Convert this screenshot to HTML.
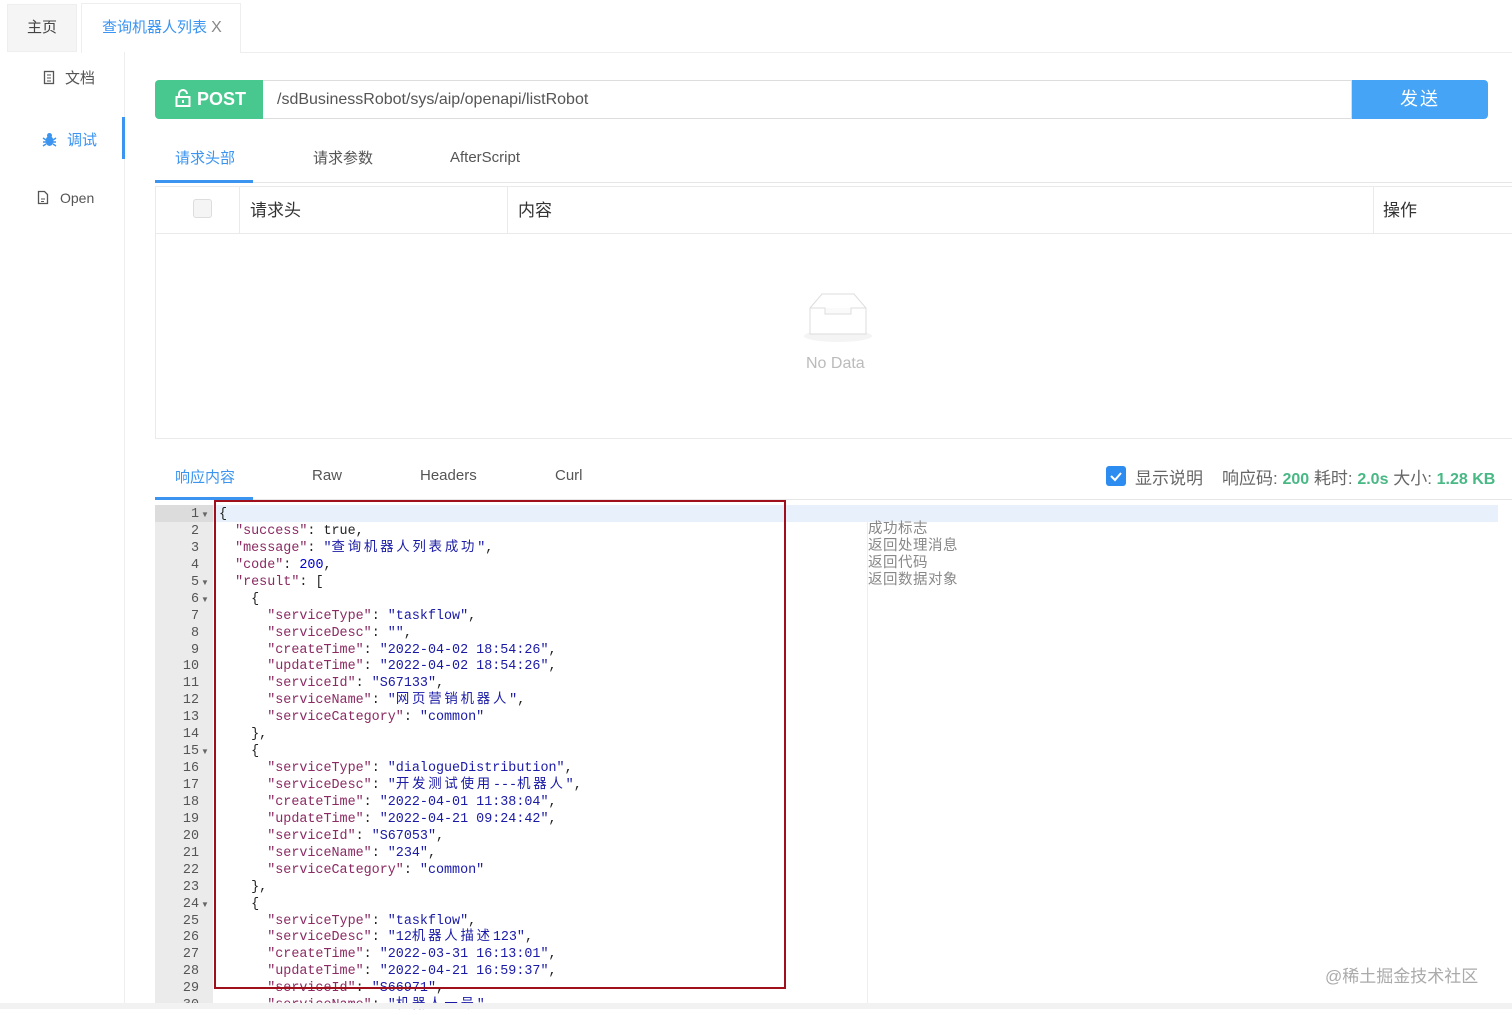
<!DOCTYPE html>
<html><head><meta charset="utf-8"><style>
*{margin:0;padding:0;box-sizing:border-box}
body{width:1512px;height:1009px;overflow:hidden;background:#fff;font-family:"Liberation Sans","Noto Sans CJK SC",sans-serif;position:relative;color:#333}
.abs{position:absolute}
.tab0{left:7px;top:4px;width:70px;height:48px;background:#f5f5f5;border:1px solid #eee;font-size:15px;color:#444;text-align:center;line-height:46px}
.tab1{left:81px;top:3px;width:160px;height:50px;background:#fff;border:1px solid #eee;border-bottom:none;font-size:15px;color:#3a94f0;line-height:48px;padding-left:20px}
.side{left:0;top:52px;width:125px;height:957px;border-right:1px solid #eee}
.sitem{font-size:15px;color:#555}
.code{font-family:"Liberation Mono","Noto Sans CJK SC",monospace;font-size:13.4px;line-height:16.93px;white-space:pre;color:#222}
.k{color:#8b2a63}.s{color:#1a1aa6}.n{color:#0000cd}
.c{letter-spacing:2.8px}
.ln{font-family:"Liberation Mono",monospace;font-size:13.4px;line-height:16.93px;color:#555;text-align:right;white-space:pre}
</style></head><body>
<div class="abs tab0">主页</div>
<div class="abs tab1">查询机器人列表 <span style="color:#888;font-size:16px">X</span></div>
<div class="abs" style="left:241px;top:52px;width:1271px;height:1px;background:#eee"></div>
<div class="abs side"></div>
<div class="abs sitem" style="left:43px;top:67px"><svg width="12" height="15" style="vertical-align:-2px;margin-right:10px"><rect x="1.5" y="1.5" width="9" height="12" fill="none" stroke="#555" stroke-width="1.3"/><path d="M4 5h4M4 8h4M4 11h4" stroke="#555"/></svg>文档</div>
<div class="abs sitem" style="left:42px;top:129px;color:#3a94f0"><svg width="15" height="15" style="vertical-align:-2px;margin-right:10px"><ellipse cx="7.5" cy="9" rx="4" ry="5" fill="#3a94f0"/><circle cx="7.5" cy="3.5" r="2.5" fill="#3a94f0"/><path d="M1 6l3 2M14 6l-3 2M1 10h3M14 10h-3M1 14l3-2M14 14l-3-2" stroke="#3a94f0" stroke-width="1.5"/></svg>调试</div>
<div class="abs" style="left:122px;top:117px;width:3px;height:42px;background:#3a94f0"></div>
<div class="abs sitem" style="left:37px;top:190px;font-size:14px"><svg width="12" height="15" style="vertical-align:-2px;margin-right:11px"><path d="M1.5 1.5h6l3 3v9h-9z" fill="none" stroke="#555" stroke-width="1.3"/><path d="M4 9h4M4 11.5h3" stroke="#555"/></svg>Open</div>

<div class="abs" style="left:155px;top:80px;width:108px;height:39px;background:#48c78e;border-radius:4px 0 0 4px;color:#fff;font-weight:bold;font-size:18px;line-height:39px;padding-left:20px"><svg width="16" height="18" style="vertical-align:-2px;margin-right:6px"><rect x="1.5" y="8" width="13" height="9" fill="none" stroke="#fff" stroke-width="2"/><path d="M4 8V5a4 4 0 0 1 8 0" fill="none" stroke="#fff" stroke-width="2"/><path d="M8 11v3" stroke="#fff" stroke-width="2"/></svg>POST</div>
<div class="abs" style="left:263px;top:80px;width:1089px;height:39px;border:1px solid #ddd;border-left:none;font-size:16px;color:#555;line-height:37px;padding-left:14px">/sdBusinessRobot/sys/aip/openapi/listRobot</div>
<div class="abs" style="left:1352px;top:80px;width:136px;height:39px;background:#46a4f7;border-radius:0 4px 4px 0;color:#fff;font-size:18px;text-align:center;line-height:39px;letter-spacing:2px">发送</div>

<div class="abs" style="left:175px;top:147px;font-size:15px;color:#3a94f0">请求头部</div>
<div class="abs" style="left:313px;top:147px;font-size:15px;color:#555">请求参数</div>
<div class="abs" style="left:450px;top:149px;font-size:15px;color:#555">AfterScript</div>
<div class="abs" style="left:155px;top:182px;width:1357px;height:1px;background:#e6e6e6"></div>
<div class="abs" style="left:155px;top:180px;width:98px;height:3px;background:#3a94f0"></div>

<div class="abs" style="left:155px;top:186px;width:1357px;height:253px;border:1px solid #eaeaea;border-right:none"></div>
<div class="abs" style="left:155px;top:233px;width:1357px;height:1px;background:#eaeaea"></div>
<div class="abs" style="left:239px;top:187px;width:1px;height:46px;background:#eaeaea"></div>
<div class="abs" style="left:507px;top:187px;width:1px;height:46px;background:#eaeaea"></div>
<div class="abs" style="left:1373px;top:187px;width:1px;height:46px;background:#eaeaea"></div>
<div class="abs" style="left:193px;top:199px;width:19px;height:19px;border:1px solid #ddd;border-radius:3px;background:#f5f5f5"></div>
<div class="abs" style="left:250px;top:196px;font-size:17px">请求头</div>
<div class="abs" style="left:518px;top:196px;font-size:17px">内容</div>
<div class="abs" style="left:1383px;top:196px;font-size:17px">操作</div>
<svg class="abs" style="left:800px;top:290px" width="76" height="55"><ellipse cx="38" cy="46" rx="34" ry="6" fill="#f4f4f4"/><path d="M10 18L22 4h32l12 14v26H10z" fill="#fff" stroke="#ddd"/><path d="M10 18h15v6h26v-6h15" fill="#fafafa" stroke="#ddd"/></svg>
<div class="abs" style="left:806px;top:355px;font-size:16px;color:#bbb">No Data</div>

<div class="abs" style="left:175px;top:466px;font-size:15px;color:#3a94f0">响应内容</div>
<div class="abs" style="left:312px;top:467px;font-size:15px;color:#555">Raw</div>
<div class="abs" style="left:420px;top:467px;font-size:15px;color:#555">Headers</div>
<div class="abs" style="left:555px;top:467px;font-size:15px;color:#555">Curl</div>
<div class="abs" style="left:155px;top:499px;width:1357px;height:1px;background:#e6e6e6"></div>
<div class="abs" style="left:155px;top:497px;width:98px;height:3px;background:#3a94f0"></div>
<div class="abs" style="left:1106px;top:466px;width:20px;height:20px;background:#2d8cf0;border-radius:3px"><svg width="20" height="20"><path d="M5 10l4 4 6-7" fill="none" stroke="#fff" stroke-width="2"/></svg></div>
<div class="abs" style="left:1135px;top:464px;font-size:17px;color:#666;white-space:nowrap">显示说明<span style="margin-left:19px">响应码: </span><b style="color:#48b884;font-size:16px">200</b> 耗时: <b style="color:#48b884;font-size:16px">2.0s</b> 大小: <b style="color:#48b884;font-size:16px">1.28 KB</b></div>

<div class="abs" style="left:155px;top:505px;width:58px;height:504px;background:#ebebeb"></div>
<div class="abs" style="left:155px;top:505px;width:58px;height:17px;background:#dcdcdc"></div>
<div class="abs" style="left:213px;top:505px;width:1285px;height:17px;background:#e8f0fc"></div>
<div class="abs" style="left:867px;top:522px;width:1px;height:487px;background:#eee"></div>
<div class="abs ln" style="left:155px;top:507px;width:44px">1
2
3
4
5
6
7
8
9
10
11
12
13
14
15
16
17
18
19
20
21
22
23
24
25
26
27
28
29
30</div>
<div class="abs" style="left:201px;top:507px;font-size:8px;color:#666;line-height:16.93px;white-space:pre">▼



▼
▼








▼








▼</div>
<div class="abs code" style="left:219px;top:507px">{
  <span class="k">"success"</span>: true,
  <span class="k">"message"</span>: <span class="s">"<span class="c">查询机器人列表成功</span>"</span>,
  <span class="k">"code"</span>: <span class="n">200</span>,
  <span class="k">"result"</span>: [
    {
      <span class="k">"serviceType"</span>: <span class="s">"taskflow"</span>,
      <span class="k">"serviceDesc"</span>: <span class="s">""</span>,
      <span class="k">"createTime"</span>: <span class="s">"2022-04-02 18:54:26"</span>,
      <span class="k">"updateTime"</span>: <span class="s">"2022-04-02 18:54:26"</span>,
      <span class="k">"serviceId"</span>: <span class="s">"S67133"</span>,
      <span class="k">"serviceName"</span>: <span class="s">"<span class="c">网页营销机器人</span>"</span>,
      <span class="k">"serviceCategory"</span>: <span class="s">"common"</span>
    },
    {
      <span class="k">"serviceType"</span>: <span class="s">"dialogueDistribution"</span>,
      <span class="k">"serviceDesc"</span>: <span class="s">"<span class="c">开发测试使用</span>---<span class="c">机器人</span>"</span>,
      <span class="k">"createTime"</span>: <span class="s">"2022-04-01 11:38:04"</span>,
      <span class="k">"updateTime"</span>: <span class="s">"2022-04-21 09:24:42"</span>,
      <span class="k">"serviceId"</span>: <span class="s">"S67053"</span>,
      <span class="k">"serviceName"</span>: <span class="s">"234"</span>,
      <span class="k">"serviceCategory"</span>: <span class="s">"common"</span>
    },
    {
      <span class="k">"serviceType"</span>: <span class="s">"taskflow"</span>,
      <span class="k">"serviceDesc"</span>: <span class="s">"12<span class="c">机器人描述</span>123"</span>,
      <span class="k">"createTime"</span>: <span class="s">"2022-03-31 16:13:01"</span>,
      <span class="k">"updateTime"</span>: <span class="s">"2022-04-21 16:59:37"</span>,
      <span class="k">"serviceId"</span>: <span class="s">"S66971"</span>,
      <span class="k">"serviceName"</span>: <span class="s">"<span class="c">机器人一号</span>"</span></div>
<div class="abs" style="left:868px;top:521px;font-size:14.5px;letter-spacing:0.5px;line-height:17px;color:#888">成功标志<br>返回处理消息<br>返回代码<br>返回数据对象</div>
<div class="abs" style="left:214px;top:500px;width:572px;height:489px;border:2px solid #a0101c"></div>
<div class="abs" style="left:0;top:1003px;width:1512px;height:6px;background:#f2f2f2"></div>
<div class="abs" style="left:1325px;top:962px;font-size:17px;color:#aaa">@稀土掘金技术社区</div>
</body></html>
